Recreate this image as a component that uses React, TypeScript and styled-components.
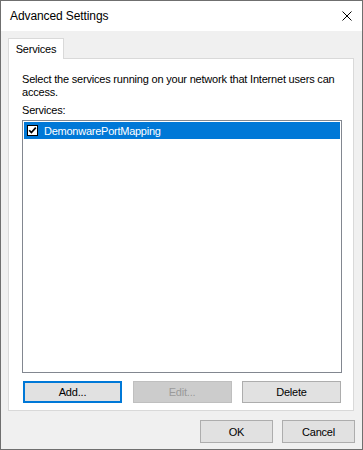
import React from "react";
import styled, { createGlobalStyle } from "styled-components";

const GlobalStyle = createGlobalStyle`
  html, body { margin: 0; padding: 0; background: #ffffff; }
  body { font-family: "Liberation Sans", Arial, sans-serif; }
  * { box-sizing: border-box; }
`;

const Window = styled.div`
  width: 363px;
  height: 450px;
  border: 1px solid #6f6f6f;
  display: flex;
  flex-direction: column;
  background: #f0f0f0;
`;

const TitleBar = styled.div`
  height: 30px;
  flex: none;
  background: #ffffff;
  display: flex;
  align-items: center;
  justify-content: space-between;
  padding: 0 10px 0 8px;
`;

const Title = styled.span`
  font-family: "Liberation Sans", Arial, sans-serif;
  font-size: 12px;
  letter-spacing: -0.1px;
  color: #000000;
  padding-left: 1px;
`;

const CloseIcon = styled.svg`
  width: 10px;
  height: 10px;
  margin-top: -1px;
  display: block;
`;

const Body = styled.div`
  flex: 1;
  display: flex;
  flex-direction: column;
  padding: 7px 7px 6px 7px;
`;

const TabStrip = styled.div`
  display: flex;
  height: 20px;
`;

const Tab = styled.div<{ $active?: boolean }>`
  position: relative;
  z-index: 1;
  width: 56px;
  height: 21px;
  border: 1px solid #d9d9d9;
  border-bottom: none;
  background: ${(p) => (p.$active ? "#ffffff" : "#f0f0f0")};
  font-size: 11px;
  letter-spacing: -0.2px;
  color: #000000;
  display: flex;
  justify-content: center;
  padding-top: 4px;
`;

const Panel = styled.div`
  height: 353px;
  margin-right: 1px;
  border: 1px solid #d9d9d9;
  background: #ffffff;
  padding: 14px 11px 7px 13px;
  display: flex;
  flex-direction: column;
`;

const Description = styled.p`
  margin: 0;
  font-size: 11px;
  line-height: 13px;
  letter-spacing: -0.2px;
  color: #000000;
`;

const Label = styled.div`
  margin-top: 5px;
  font-size: 11px;
  line-height: 13px;
  letter-spacing: -0.2px;
  color: #000000;
`;

const ListBox = styled.div`
  margin-top: 3px;
  height: 253px;
  border: 1px solid #828790;
  background: #ffffff;
  padding: 1px;
`;

const ListRow = styled.div<{ $selected?: boolean }>`
  height: 17px;
  display: flex;
  align-items: center;
  padding-left: 3px;
  gap: 6px;
  background: ${(p) => (p.$selected ? "#0078d7" : "transparent")};
  color: ${(p) => (p.$selected ? "#ffffff" : "#000000")};
  font-size: 11px;
  letter-spacing: -0.25px;
`;

const CheckBox = styled.span`
  width: 11px;
  height: 11px;
  border: 1px solid #000000;
  background: #ffffff;
  display: flex;
  align-items: center;
  justify-content: center;
  flex: none;
`;

const ButtonRow = styled.div`
  margin-top: 8px;
  padding: 0 1px;
  display: flex;
  justify-content: space-between;
`;

const DialogButton = styled.button<{ $default?: boolean; $width?: number; $height?: number }>`
  width: ${(p) => p.$width ?? 99}px;
  height: ${(p) => p.$height ?? 22}px;
  margin: 0;
  padding: 0;
  font-family: "Liberation Sans", Arial, sans-serif;
  font-size: 11px;
  letter-spacing: -0.2px;
  color: #000000;
  background: #e1e1e1;
  border: ${(p) => (p.$default ? "2px solid #0078d7" : "1px solid #adadad")};
  border-radius: 0;
  outline: none;
  &:disabled {
    background: #cccccc;
    border-color: #bfbfbf;
    color: #9a9a9a;
  }
`;

const Footer = styled.div`
  margin-top: 9px;
  display: flex;
  justify-content: flex-end;
  gap: 9px;
`;

export default function App() {
  return (
    <>
      <GlobalStyle />
      <Window>
        <TitleBar>
          <Title>Advanced Settings</Title>
          <CloseIcon viewBox="0 0 10 10">
            <path d="M0.5 0.5 L9.5 9.5 M9.5 0.5 L0.5 9.5" stroke="#000" strokeWidth="1" fill="none" />
          </CloseIcon>
        </TitleBar>
        <Body>
          <TabStrip>
            <Tab $active>Services</Tab>
          </TabStrip>
          <Panel>
            <Description>
              Select the services running on your network that Internet users can access.
            </Description>
            <Label>Services:</Label>
            <ListBox>
              <ListRow $selected>
                <CheckBox>
                  <svg width="9" height="9" viewBox="0 0 9 9">
                    <path d="M1.2 4.2 L3.4 6.6 L7.8 1.6" stroke="#000" strokeWidth="1.7" fill="none" />
                  </svg>
                </CheckBox>
                DemonwarePortMapping
              </ListRow>
            </ListBox>
            <ButtonRow>
              <DialogButton $default>Add...</DialogButton>
              <DialogButton disabled>Edit...</DialogButton>
              <DialogButton>Delete</DialogButton>
            </ButtonRow>
          </Panel>
          <Footer>
            <DialogButton $width={73} $height={23}>OK</DialogButton>
            <DialogButton $width={73} $height={23}>Cancel</DialogButton>
          </Footer>
        </Body>
      </Window>
    </>
  );
}
